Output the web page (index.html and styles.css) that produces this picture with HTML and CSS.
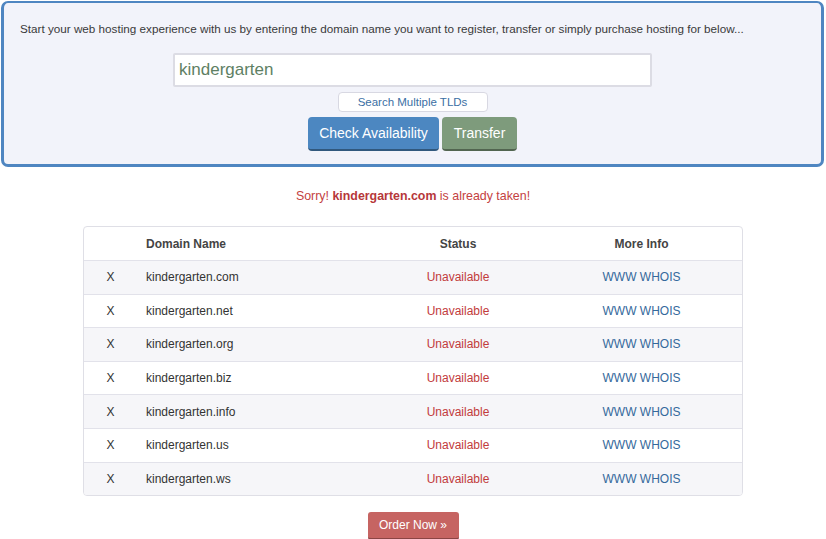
FILE: index.html
```html
<!DOCTYPE html>
<html>
<head>
<meta charset="utf-8">
<link rel="stylesheet" href="styles.css">
</head>
<body>
<div class="page">
  <div class="search-box">
    <p class="intro">Start your web hosting experience with us by entering the domain name you want to register, transfer or simply purchase hosting for below...</p>
    <div class="input">kindergarten</div>
    <div class="tld-btn">Search Multiple TLDs</div>
    <div class="actions">
      <div class="btn btn-blue">Check Availability</div>
      <div class="btn btn-green">Transfer</div>
    </div>
  </div>

  <p class="sorry">Sorry! <b>kindergarten.com</b> is already taken!</p>

  <div class="results">
    <div class="row head">
      <div class="c1"></div>
      <div class="c2">Domain Name</div>
      <div class="c3">Status</div>
      <div class="c4">More Info</div>
    </div>
    <div class="row odd"><div class="c1">X</div><div class="c2">kindergarten.com</div><div class="c3 red">Unavailable</div><div class="c4 blue">WWW WHOIS</div></div>
    <div class="row"><div class="c1">X</div><div class="c2">kindergarten.net</div><div class="c3 red">Unavailable</div><div class="c4 blue">WWW WHOIS</div></div>
    <div class="row odd"><div class="c1">X</div><div class="c2">kindergarten.org</div><div class="c3 red">Unavailable</div><div class="c4 blue">WWW WHOIS</div></div>
    <div class="row"><div class="c1">X</div><div class="c2">kindergarten.biz</div><div class="c3 red">Unavailable</div><div class="c4 blue">WWW WHOIS</div></div>
    <div class="row odd"><div class="c1">X</div><div class="c2">kindergarten.info</div><div class="c3 red">Unavailable</div><div class="c4 blue">WWW WHOIS</div></div>
    <div class="row"><div class="c1">X</div><div class="c2">kindergarten.us</div><div class="c3 red">Unavailable</div><div class="c4 blue">WWW WHOIS</div></div>
    <div class="row odd last"><div class="c1">X</div><div class="c2">kindergarten.ws</div><div class="c3 red">Unavailable</div><div class="c4 blue">WWW WHOIS</div></div>
  </div>

  <div class="order-wrap"><div class="order">Order Now &raquo;</div></div>
</div>
</body>
</html>
```

FILE: styles.css
```css
html, body {
  margin: 0;
  padding: 0;
  background: #ffffff;
  font-family: "Liberation Sans", Arial, Helvetica, sans-serif;
  color: #333;
}
.page {
  width: 826px;
  height: 539px;
  overflow: hidden;
  padding-top: 1px;
  box-sizing: border-box;
}
.search-box {
  margin: 0 2px 0 1px;
  height: 166px;
  box-sizing: border-box;
  border: 3px solid #4f86c1;
  border-top-width: 2px;
  border-radius: 7px;
  background: #f2f3fa;
  display: flex;
  flex-direction: column;
  align-items: center;
  padding-top: 18px;
}
.intro {
  margin: 0;
  align-self: flex-start;
  padding-left: 16px;
  font-size: 11.7px;
  line-height: 16px;
  color: #3a3a3a;
}
.input {
  margin-top: 16px;
  width: 479px;
  height: 34px;
  box-sizing: border-box;
  background: #fff;
  border: 2px solid #dcdce4;
  border-radius: 2px;
  font-size: 17px;
  line-height: 30px;
  padding-left: 4px;
  color: #5e7f64;
}
.tld-btn {
  margin-top: 5px;
  width: 150px;
  height: 20px;
  box-sizing: border-box;
  background: #fff;
  border: 1px solid #d8d8e2;
  border-radius: 4px;
  font-size: 11.5px;
  line-height: 18px;
  text-align: center;
  color: #3b6fa4;
}
.actions {
  margin-top: 5px;
  display: flex;
  gap: 3px;
}
.btn {
  height: 34px;
  box-sizing: border-box;
  border-radius: 4px;
  color: #fff;
  font-size: 14px;
  line-height: 33px;
  text-align: center;
  border-bottom: 2px solid rgba(0,0,0,0.35);
}
.btn-blue {
  width: 131px;
  background: #4c87c1;
}
.btn-green {
  width: 75px;
  background: #7e9b7c;
}
.sorry {
  margin: 21px 0 0 0;
  text-align: center;
  font-size: 12.4px;
  line-height: 16px;
  color: #c4413f;
}
.sorry b {
  color: #b6373a;
}
.results {
  margin: 22px 0 0 83px;
  width: 660px;
  box-sizing: border-box;
  border: 1px solid #dfdfe6;
  border-radius: 4px;
  overflow: hidden;
}
.row {
  display: grid;
  grid-template-columns: 53px 240px 162px 1fr;
  height: 33.6px;
  align-items: center;
  font-size: 12px;
  border-top: 1px solid #e2e2ea;
  box-sizing: border-box;
}
.row.head {
  border-top: none;
  height: 33px;
  font-weight: bold;
  color: #444;
}
.row.odd {
  background: #f6f6f9;
}
.c1 { text-align: center; }
.c2 { padding-left: 9px; }
.c3 { text-align: center; }
.c4 { text-align: center; padding-left: 2px; }
.red { color: #c23b3c; }
.blue { color: #34699c; }
.order-wrap {
  display: flex;
  justify-content: center;
  margin-top: 16px;
}
.order {
  width: 91px;
  height: 28px;
  box-sizing: border-box;
  background: #c66462;
  color: #fff;
  border-radius: 3px;
  font-size: 12px;
  line-height: 27px;
  text-align: center;
  border-bottom: 2px solid rgba(0,0,0,0.3);
}
```
